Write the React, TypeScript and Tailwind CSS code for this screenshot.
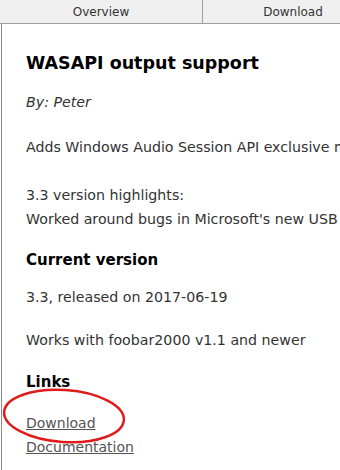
export default function App() {
  const font = { fontFamily: '"DejaVu Sans", Verdana, sans-serif' }

  return (
    <div className="relative w-[340px] h-[470px] overflow-hidden bg-white" style={font}>
      {/* Tab strip */}
      <div className="flex h-[24px] bg-[#f0f0f0] border-b border-[#a0a0a0] text-[12px] text-[#333]">
        <div className="w-[203px] flex-none flex items-center justify-center border-r border-[#a0a0a0]">
          Overview
        </div>
        <div className="w-[180px] flex-none flex items-center justify-center">Download</div>
      </div>

      {/* Content */}
      <div className="ml-px h-full border-l border-[#8a8a8a] pl-[24px] pt-[28px] text-[14.2px] text-[#333]">
        <h1 className="text-[17.5px] font-bold text-black leading-[22px]">WASAPI output support</h1>
        <p className="mt-[19px] italic leading-[18px]">By: Peter</p>
        <p className="mt-[27px] leading-[18px] whitespace-nowrap">
          Adds Windows Audio Session API exclusive mode output support
        </p>
        <p className="mt-[27px] leading-[24px] whitespace-nowrap">
          3.3 version highlights:
          <br />
          Worked around bugs in Microsoft's new USB Audio 2.0 drivers
        </p>
        <h2 className="mt-[19px] text-[15px] font-bold text-black leading-[20px]">Current version</h2>
        <p className="mt-[18px] leading-[18px]">3.3, released on 2017-06-19</p>
        <p className="mt-[25px] leading-[18px]">Works with foobar2000 v1.1 and newer</p>
        <h2 className="mt-[23px] text-[15px] font-bold text-black leading-[20px]">Links</h2>
        <div className="mt-[19px] flex flex-col items-start text-[14px] leading-[24px] text-[#555]">
          <a className="underline">Download</a>
          <a className="underline">Documentation</a>
        </div>
      </div>

      {/* Red annotation ring */}
      <svg className="absolute left-0 top-[385px]" width="130" height="65" viewBox="0 0 130 65">
        <ellipse
          cx="64"
          cy="31"
          rx="60"
          ry="26"
          fill="none"
          stroke="#e01b1b"
          strokeWidth="2.5"
          transform="rotate(4 64 31)"
        />
      </svg>
    </div>
  )
}
